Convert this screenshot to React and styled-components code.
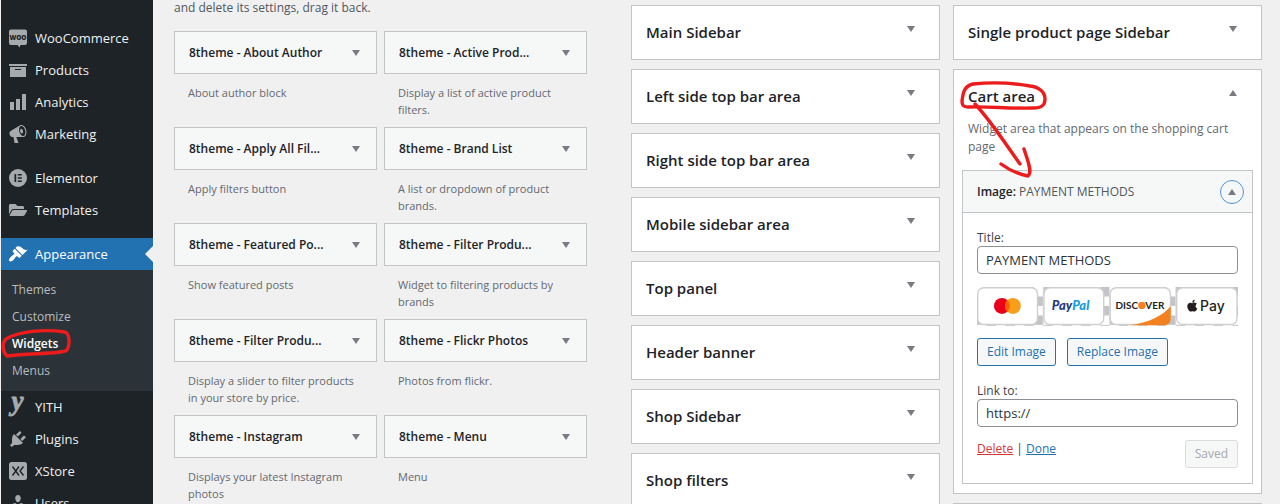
import React, { useState } from "react";
import styled, { createGlobalStyle } from "styled-components";
import { FaFolderOpen } from "react-icons/fa";

const GlobalStyle = createGlobalStyle`
  * {
    box-sizing: border-box;
  }
  body {
    margin: 0;
    background: #f0f0f1;
    color: #3c434a;
    font-family: "Open Sans", "Noto Sans", sans-serif;
    font-size: 12px;
    line-height: 18px;
  }
  h2, h3, p, ul {
    margin: 0;
    padding: 0;
  }
  button, input {
    font-family: inherit;
  }
`;

const Shell = styled.div`
  display: flex;
  height: 100vh;
  overflow: hidden;
`;

const SideMenu = styled.nav`
  flex: 0 0 153px;
  padding-top: 22px;
  background: #1d2327;
  border-left: 1px solid #f0f0f1;
`;

const MenuGroup = styled.ul`
  list-style: none;
  margin-bottom: ${(props) => (props.$last ? "0" : "12px")};
`;

const MenuLink = styled.a`
  display: flex;
  align-items: center;
  gap: 7px;
  height: 32px;
  padding-left: 7px;
  position: relative;
  font-size: 13px;
  text-decoration: none;
  color: ${(props) => (props.$active ? "#fff" : "#f0f0f1")};
  background: ${(props) => (props.$active ? "#2271b1" : "transparent")};
  svg {
    flex: none;
    width: 20px;
    height: 20px;
    overflow: visible;
    fill: currentColor;
    color: ${(props) => (props.$active ? "#fff" : "#a7aaad")};
  }
  &::after {
    content: "";
    display: ${(props) => (props.$active ? "block" : "none")};
    position: absolute;
    right: 0;
    border: 8px solid transparent;
    border-right-color: #f0f0f1;
  }
`;

const SubMenu = styled.ul`
  list-style: none;
  padding: 6px 0 7px;
  background: #2c3338;
`;

const SubItem = styled.li`
  position: relative;
  a {
    display: block;
    padding-left: 11px;
    line-height: 27px;
    text-decoration: none;
    color: ${(props) => (props.$current ? "#fff" : "#b9bcbf")};
    font-weight: ${(props) => (props.$current ? 600 : 400)};
  }
`;

const Content = styled.main`
  flex: 1;
  min-width: 0;
  display: grid;
  grid-template-columns: 413fr 631fr;
  gap: 44px;
  align-items: start;
  padding: 0 18px 0 21px;
`;

const Intro = styled.p`
  line-height: 16px;
  margin-bottom: 15px;
  color: #50575e;
`;

const WidgetGrid = styled.div`
  display: grid;
  grid-template-columns: 1fr 1fr;
  column-gap: 7px;
`;

const WidgetHead = styled.div`
  display: flex;
  align-items: center;
  justify-content: space-between;
  height: 43px;
  padding: 0 13px 0 14px;
  background: #f6f7f7;
  border: 1px solid #c3c4c7;
  h3 {
    font-size: 12px;
    font-weight: 600;
    color: #1d2327;
    white-space: nowrap;
  }
`;

const WidgetText = styled.p`
  padding: 10px 14px 9px;
  line-height: 17px;
  font-size: 11px;
  color: #646970;
`;

const Toggle = styled.button`
  display: flex;
  align-items: center;
  justify-content: center;
  width: ${(props) => (props.$ring ? "24px" : "14px")};
  height: ${(props) => (props.$ring ? "24px" : "14px")};
  padding: 0;
  background: none;
  border: ${(props) => (props.$ring ? "1px solid #4f94d4" : "0")};
  border-radius: 50%;
  svg {
    width: 8px;
    height: 6px;
    fill: #787c82;
  }
`;

const Areas = styled.div`
  display: grid;
  grid-template-columns: 1fr 1fr;
  gap: 13px;
  padding-top: 5px;
`;

const AreaColumn = styled.div`
  display: flex;
  flex-direction: column;
  gap: 9px;
`;

const AreaCard = styled.section`
  background: #fff;
  border: 1px solid #c3c4c7;
`;

const AreaHead = styled.div`
  display: flex;
  justify-content: space-between;
  padding: 16px 21px ${(props) => (props.$open ? "13px" : "16px")} 14px;
  h2 {
    position: relative;
    font-size: 15px;
    line-height: 21px;
    font-weight: 600;
    color: #1d2327;
  }
`;

const AreaText = styled.p`
  padding: 0 14px 14px;
  color: #646970;
`;

const OpenWidget = styled.div`
  margin: 0 8px 9px;
  border: 1px solid #c3c4c7;
`;

const OpenHead = styled.div`
  display: flex;
  align-items: center;
  justify-content: space-between;
  height: 42px;
  padding: 0 8px 0 14px;
  background: #f6f7f7;
  border-bottom: 1px solid #c3c4c7;
  h3 {
    font-size: 12px;
    font-weight: 600;
    color: #1d2327;
  }
  span {
    font-weight: 400;
    color: #50575e;
  }
`;

const WidgetForm = styled.form`
  padding: 16px 14px 15px;
`;

const Field = styled.div`
  label {
    display: block;
    line-height: 17px;
  }
  input {
    display: block;
    width: 100%;
    height: 28px;
    padding: 0 8px;
    font-size: 13px;
    color: #2c3338;
    background: #fff;
    border: 1px solid #8c8f94;
    border-radius: 4px;
  }
`;

const Preview = styled.svg`
  display: block;
  width: 100%;
  margin: 13px 0 12px;
`;

const ButtonRow = styled.div`
  display: flex;
  gap: 11px;
  margin-bottom: 16px;
`;

const Btn = styled.button`
  height: 28px;
  padding: 0 9px;
  font-size: 12px;
  white-space: nowrap;
  color: ${(props) => (props.disabled ? "#a7aaad" : "#2271b1")};
  background: #f6f7f7;
  border: 1px solid ${(props) => (props.disabled ? "#dcdcde" : "#2271b1")};
  border-radius: 3px;
`;

const Actions = styled.div`
  display: flex;
  justify-content: space-between;
  align-items: flex-start;
  margin-top: 13px;
`;

const ActionLink = styled.a`
  color: ${(props) => (props.$danger ? "#d63638" : "#2271b1")};
`;

const Marker = styled.svg`
  position: absolute;
  z-index: 2;
  left: ${(props) => props.$left};
  top: ${(props) => props.$top};
  fill: none;
  stroke: #ec1c1c;
  stroke-width: 3.4;
  stroke-linecap: round;
  stroke-linejoin: round;
  pointer-events: none;
`;

const icons = {
  woo: (
    <svg viewBox="0 0 20 20">
      <path d="M3 1.500h14a2 2 0 0 1 2 2v11.500a2 2 0 0 1-2 2h-4.500l-1 2.500-2-2.500H3a2 2 0 0 1-2-2V3.500a2 2 0 0 1 2-2z" />
      <text
        x="10"
        y="11.500"
        textAnchor="middle"
        fontSize="6.500"
        fontWeight="800"
        fill="#1d2327"
      >
        WOO
      </text>
    </svg>
  ),
  products: (
    <svg viewBox="0 0 20 20">
      <path d="M19 4v2H1V4h18zM2 7h16v10H2V7zm11 3V9H7v1h6z" />
    </svg>
  ),
  analytics: (
    <svg viewBox="0 0 20 20">
      <path d="M18 18V2h-4v16h4zm-6 0V7H8v11h4zm-6 0v-8H2v8h4z" />
    </svg>
  ),
  marketing: (
    <svg viewBox="0 0 20 20">
      <path d="M18.150 5.940c.46 1.620.38 3.220-.02 4.480-.42 1.280-1.260 2.180-2.300 2.480-.16.06-.26.06-.4.06-.06.02-.12.02-.18.02-.06.02-.14.02-.22.02h-6.800l2.220 5.500c.02.14-.06.26-.14.34-.08.1-.24.16-.34.16H6.950c-.1 0-.26-.06-.34-.16-.08-.08-.16-.2-.14-.34l-1-5.500H4.250l-.02-.02c-.5.06-1.080-.18-1.540-.62s-.88-1.080-1.060-1.880c-.24-.8-.2-1.560-.02-2.200.18-.62.58-1.080 1.060-1.300l.02-.02 9-5.400c.1-.06.18-.1.24-.16.06-.04.14-.08.24-.12.16-.08.28-.12.5-.18 1.040-.3 2.240.1 3.220.98s1.840 2.240 2.260 3.860zm-2.580 5.980h-.02c.4-.1.74-.34 1.040-.7.58-.7.86-1.760.86-3.040 0-.64-.1-1.300-.28-1.980-.34-1.360-1.020-2.500-1.780-3.240s-1.680-1.100-2.460-.88c-.82.22-1.400.96-1.700 2-.32 1.040-.28 2.360.06 3.720.38 1.360 1 2.500 1.800 3.240.78.74 1.620 1.100 2.480.88zm-2.540-7.080c.22-.04.42-.02.62.04.38.16.76.48 1.020 1s.42 1.200.42 1.780c0 .3-.04.56-.12.8-.18.48-.44.84-.86.94-.34.1-.8-.06-1.140-.4s-.64-.86-.78-1.500c-.18-.62-.12-1.240.02-1.720s.48-.84.82-.94z" />
    </svg>
  ),
  elementor: (
    <svg viewBox="0 0 20 20">
      <circle cx="10" cy="10" r="9" />
      <path
        d="M6.500 6h1.700v8H6.500zM9.800 6h4v1.600h-4zM9.800 9.200h4v1.600h-4zM9.800 12.400h4V14h-4z"
        fill="#1d2327"
      />
    </svg>
  ),
  templates: <FaFolderOpen viewBox="-30 0 636 512" />,
  appearance: (
    <svg viewBox="0 0 20 20">
      <path d="M14.480 11.060L7.410 3.990l1.500-1.500c.5-.56 2.300-.47 3.510.32 1.210.8 1.430 1.280 2.910 2.100 1.180.64 2.450 1.260 4.450.85zm-.71.71L6.700 4.700 4.930 6.470c-.39.39-.39 1.020 0 1.410l1.060 1.060c.39.39.39 1.030 0 1.420-.6.6-1.430 1.110-2.210 1.690-.35.26-.7.53-1.010.84C1.430 14.230.4 16.080 1.400 17.070c.99 1 2.840-.03 4.180-1.360.31-.31.58-.66.85-1.020.57-.78 1.080-1.610 1.690-2.210.39-.39 1.020-.39 1.410 0l1.060 1.060c.39.39 1.020.39 1.410 0z" />
    </svg>
  ),
  yith: (
    <svg viewBox="0 0 20 20">
      <text
        x="9.500"
        y="13"
        textAnchor="middle"
        fontFamily="Liberation Serif, serif"
        fontStyle="italic"
        fontWeight="700"
        fontSize="27"
        stroke="currentColor"
        strokeWidth="0.800"
      >
        y
      </text>
    </svg>
  ),
  plugins: (
    <svg viewBox="0 0 20 20">
      <path d="M13.110 4.360L9.870 7.600 8 5.730l3.240-3.240c.35-.34 1.050-.2 1.560.32.52.51.66 1.210.31 1.550zm-8 1.770l.91-1.120 9.010 9.010-1.190.84c-.71.71-2.630 1.160-3.820 1.160H6.140L4.900 17.260c-.59.59-1.540.59-2.120 0-.59-.58-.59-1.530 0-2.120l1.240-1.240v-3.880c0-1.130.4-3.190 1.090-3.890zm7.260 3.970l3.240-3.240c.34-.35 1.040-.21 1.550.31.52.51.66 1.210.31 1.550l-3.240 3.250z" />
    </svg>
  ),
  xstore: (
    <svg viewBox="0 0 20 20">
      <rect x="1" y="1" width="18" height="18" rx="2.500" />
      <path
        d="M4.500 5.500l6.500 9M11 5.500l-6.500 9M15.500 5.500L12 10l3.500 4.500"
        fill="none"
        stroke="#1d2327"
        strokeWidth="1.400"
      />
    </svg>
  ),
  users: (
    <svg viewBox="0 0 20 20">
      <path d="M10 9.250c-2.270 0-2.730-3.440-2.730-3.440C7 4.020 7.820 2 9.970 2c2.160 0 2.980 2.020 2.710 3.810 0 0-.41 3.440-2.680 3.440zm0 2.570L12.720 10c2.390 0 4.520 2.330 4.520 4.530v2.490s-3.650 1.130-7.240 1.130c-3.650 0-7.240-1.130-7.240-1.130v-2.490c0-2.250 1.940-4.480 4.470-4.480z" />
    </svg>
  ),
};

const menu = [
  [
    ["woo", "WooCommerce"],
    ["products", "Products"],
    ["analytics", "Analytics"],
    ["marketing", "Marketing"],
  ],
  [
    ["elementor", "Elementor"],
    ["templates", "Templates"],
  ],
  [
    ["appearance", "Appearance"],
    ["yith", "YITH"],
    ["plugins", "Plugins"],
    ["xstore", "XStore"],
    ["users", "Users"],
  ],
];

const subPages = ["Themes", "Customize", "Widgets", "Menus"];

const widgets = [
  ["8theme - About Author", "About author block"],
  ["8theme - Active Prod...", "Display a list of active product filters."],
  ["8theme - Apply All Fil...", "Apply filters button"],
  ["8theme - Brand List", "A list or dropdown of product brands."],
  ["8theme - Featured Po...", "Show featured posts"],
  ["8theme - Filter Produ...", "Widget to filtering products by brands"],
  [
    "8theme - Filter Produ...",
    "Display a slider to filter products in your store by price.",
  ],
  ["8theme - Flickr Photos", "Photos from flickr."],
  ["8theme - Instagram", "Displays your latest Instagram photos"],
  ["8theme - Menu", "Menu"],
];

const areas = [
  "Main Sidebar",
  "Left side top bar area",
  "Right side top bar area",
  "Mobile sidebar area",
  "Top panel",
  "Header banner",
  "Shop Sidebar",
  "Shop filters",
];

function Arrow({ up, ring, label }) {
  return (
    <Toggle type="button" $ring={ring} aria-label={label} aria-expanded={!!up}>
      <svg viewBox="0 0 8 6">
        <path d={up ? "M0 6h8L4 0z" : "M0 0h8L4 6z"} />
      </svg>
    </Toggle>
  );
}

function Area({ title }) {
  return (
    <AreaCard>
      <AreaHead>
        <h2>{title}</h2>
        <Arrow label={title} />
      </AreaHead>
    </AreaCard>
  );
}

function PaymentImage() {
  return (
    <Preview viewBox="0 0 262 39" role="img" aria-label="Payment methods">
      <defs>
        <pattern
          id="checks"
          width="19"
          height="19"
          patternUnits="userSpaceOnUse"
        >
          <rect width="19" height="19" fill="#fff" />
          <path d="M9.500 0H19v9.500H9.500zM0 9.500h9.500V19H0z" fill="#c3c4c7" />
        </pattern>
      </defs>
      <rect width="262" height="39" fill="url(#checks)" />
      <g fill="#fff" stroke="#cfcfcf" strokeWidth="1.400">
        <rect x="0.700" y="0.700" width="60" height="37" rx="6" />
        <rect x="67.200" y="0.700" width="60" height="37" rx="6" />
        <rect x="133.700" y="0.700" width="60.500" height="37" rx="6" />
        <rect x="200.500" y="0.700" width="60.500" height="37" rx="6" />
      </g>
      <circle cx="25" cy="19" r="8" fill="#eb001b" />
      <circle cx="36" cy="19" r="8" fill="#f79e1b" />
      <path d="M30.500 13.200a8 8 0 0 1 0 11.600a8 8 0 0 1 0-11.600z" fill="#ff5f00" />
      <g fontFamily="Lato" fontStyle="italic" fontWeight="900" fontSize="13">
        <text x="75" y="23" fill="#253b80">
          Pay
          <tspan fill="#179bd7">Pal</tspan>
        </text>
      </g>
      <path
        d="M153 38.400c18-2 33-9 41.500-19v13.300a6 6 0 0 1-6 5.700z"
        fill="#f48120"
      />
      <g fontFamily="Lato" fontWeight="700" fontSize="10" fill="#231f20">
        <text x="139" y="22">
          DISC
        </text>
        <text x="169" y="22">
          VER
        </text>
      </g>
      <circle cx="165.500" cy="18.500" r="3.700" fill="#f48120" />
      <g fill="#231f20">
        <path
          transform="translate(211 12) scale(0.0265)"
          d="M318.700 268.700c-.2-36.700 16.400-64.400 50-84.800-18.800-26.900-47.200-41.700-84.700-44.600-35.500-2.800-74.300 20.700-88.500 20.700-15 0-49.400-19.700-76.400-19.700C63.300 141.200 4 184.800 4 273.500q0 39.300 14.400 81.200c12.800 36.700 59 126.700 107.200 125.200 25.200-.6 43-17.900 75.800-17.900 31.800 0 48.300 17.900 76.400 17.900 48.600-.7 90.400-82.500 102.600-119.300-65.200-30.700-61.700-90-61.700-91.900zm-56.600-164.200c27.300-32.400 24.800-61.900 24-72.500-24.100 1.400-52 16.400-67.900 34.900-17.500 19.800-27.800 44.300-25.600 71.900 26.100 2 49.900-11.400 69.500-34.300z"
        />
        <text x="224" y="24" fontFamily="Inter" fontSize="14" fontWeight="500">
          Pay
        </text>
      </g>
    </Preview>
  );
}

function CartArea() {
  const [title, setTitle] = useState("PAYMENT METHODS");
  const [link, setLink] = useState("https://");

  return (
    <AreaCard>
      <AreaHead $open>
        <h2>
          Cart area
          <Marker $left="-8px" $top="-6px" width="90" height="98">
            <path d="M13 4c20-2 40-1 57 2 9 1 15 6 15 13 0 7-4 9-12 9-22 1-45-2-65-1-5 0-6-2-6-6C3 13 4 6 13 4z" />
            <path d="M15 24c16 17 29 38 45 60M41 84c8 6 17 10 27 12 5-4-1-17-4-27" />
          </Marker>
        </h2>
        <Arrow up label="Cart area" />
      </AreaHead>
      <AreaText>Widget area that appears on the shopping cart page</AreaText>
      <OpenWidget>
        <OpenHead>
          <h3>
            Image: <span>PAYMENT METHODS</span>
          </h3>
          <Arrow up ring label="Image widget" />
        </OpenHead>
        <WidgetForm onSubmit={(e) => e.preventDefault()}>
          <Field>
            <label htmlFor="title">Title:</label>
            <input
              id="title"
              type="text"
              value={title}
              onChange={(e) => setTitle(e.target.value)}
            />
          </Field>
          <PaymentImage />
          <ButtonRow>
            <Btn type="button">Edit Image</Btn>
            <Btn type="button">Replace Image</Btn>
          </ButtonRow>
          <Field>
            <label htmlFor="link">Link to:</label>
            <input
              id="link"
              type="text"
              value={link}
              onChange={(e) => setLink(e.target.value)}
            />
          </Field>
          <Actions>
            <div>
              <ActionLink href="#delete" $danger>
                Delete
              </ActionLink>
              {" | "}
              <ActionLink href="#done">Done</ActionLink>
            </div>
            <Btn type="submit" disabled>
              Saved
            </Btn>
          </Actions>
        </WidgetForm>
      </OpenWidget>
    </AreaCard>
  );
}

function App() {
  return (
    <Shell>
      <GlobalStyle />
      <SideMenu>
        {menu.map((group, i) => (
          <MenuGroup key={i} $last={i === menu.length - 1}>
            {group.map(([icon, name]) => (
              <li key={name}>
                <MenuLink href={"#" + icon} $active={icon === "appearance"}>
                  {icons[icon]}
                  {name}
                </MenuLink>
                {icon === "appearance" && (
                  <SubMenu>
                    {subPages.map((page) => (
                      <SubItem key={page} $current={page === "Widgets"}>
                        <a href={"#" + page}>{page}</a>
                        {page === "Widgets" && (
                          <Marker $left="0" $top="-2px" width="72" height="32">
                            <path d="M6 28c-5-5-5-13-1-17C18 3 43 1 64 4c5 2 5 13 2 18-4 4-38 3-60 6z" />
                          </Marker>
                        )}
                      </SubItem>
                    ))}
                  </SubMenu>
                )}
              </li>
            ))}
          </MenuGroup>
        ))}
      </SideMenu>
      <Content>
        <div>
          <Intro>and delete its settings, drag it back.</Intro>
          <WidgetGrid>
            {widgets.map(([name, text], i) => (
              <div key={i}>
                <WidgetHead>
                  <h3>{name}</h3>
                  <Arrow label={name} />
                </WidgetHead>
                <WidgetText>{text}</WidgetText>
              </div>
            ))}
          </WidgetGrid>
        </div>
        <Areas>
          <AreaColumn>
            {areas.map((area) => (
              <Area key={area} title={area} />
            ))}
          </AreaColumn>
          <AreaColumn>
            <Area title="Single product page Sidebar" />
            <CartArea />
            <AreaCard />
          </AreaColumn>
        </Areas>
      </Content>
    </Shell>
  );
}

export default App;
